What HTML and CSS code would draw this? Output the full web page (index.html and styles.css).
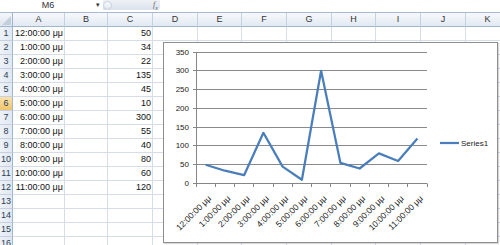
FILE: index.html
```html
<!DOCTYPE html>
<html>
<head>
    <title>Book1 - Chart</title>
    <link rel="stylesheet" href="styles.css">
</head>
<body>
    <div class="formula-bar">
        <div class="name-box">M6</div>
        <div class="name-arrow">&#9662;</div>
        <div class="fx-pill">
            <span class="fx-knob"></span>
            <span class="fx">f<sub>x</sub></span>
        </div>
        <div class="formula-input"></div>
    </div>

    <div class="sheet">
        <div class="grid" id="grid"></div>
        <div class="chart">
            <svg id="chart" width="335" height="201"></svg>
        </div>
    </div>

    <script>
        const COLS = ['A', 'B', 'C', 'D', 'E', 'F', 'G', 'H', 'I', 'J', 'K'];
        const values = [50, 34, 22, 135, 45, 10, 300, 55, 40, 80, 60, 120];
        const times = values.map((v, i) => (i === 0 ? 12 : i) + ':00:00 μμ');

        // Build the sheet grid
        const grid = document.getElementById('grid');
        let html = '<div class="corner"><span class="corner-tri"></span></div>';
        COLS.forEach(c => html += `<div class="col-head">${c}</div>`);
        for (let r = 1; r <= 16; r++) {
            html += `<div class="row-head${r === 6 ? ' selected' : ''}">${r}</div>`;
            COLS.forEach(c => {
                let text = '';
                if (r <= 12 && c === 'A') text = times[r - 1];
                if (r <= 12 && c === 'C') text = values[r - 1];
                html += `<div class="cell${text !== '' ? ' num' : ''}">${text}</div>`;
            });
        }
        grid.innerHTML = html;

        // Line chart
        const L = 33, R = 264, Y0 = 141.5;
        const step = (R - L) / 12;
        const scale = 131.5 / 350;
        const crisp = y => Math.round(y - 0.5) + 0.5;
        let s = '';

        for (let v = 0; v <= 350; v += 50) {
            const y = crisp(Y0 - v * scale);
            if (v > 0) s += `<line class="grid-line" x1="${L}" x2="${R}" y1="${y}" y2="${y}"/>`;
            s += `<line class="axis" x1="${L - 3}" x2="${L}" y1="${y}" y2="${y}"/>`;
            s += `<text class="y-label" x="26" y="${y + 2.8}">${v}</text>`;
        }
        s += `<line class="axis" x1="${L + 0.5}" x2="${L + 0.5}" y1="10" y2="${Y0}"/>`;
        s += `<line class="axis" x1="${L}" x2="${R}" y1="${Y0}" y2="${Y0}"/>`;

        for (let k = 0; k <= 12; k++) {
            const x = crisp(L + k * step);
            s += `<line class="axis" x1="${x}" x2="${x}" y1="${Y0}" y2="${Y0 + 3.5}"/>`;
        }

        times.forEach((t, i) => {
            const x = L + step * (i + 0.5) + 6;
            const y = 157;
            s += `<text class="x-label" x="${x}" y="${y}" transform="rotate(-45 ${x} ${y})">${t}</text>`;
        });

        const pts = values.map((v, i) => `${(L + step * (i + 0.5)).toFixed(1)},${(Y0 - v * scale).toFixed(1)}`);
        s += `<polyline class="series" points="${pts.join(' ')}"/>`;

        // Legend
        s += '<line class="series" x1="277" x2="296" y1="101" y2="101"/>';
        s += '<text class="legend" x="298" y="104">Series1</text>';

        document.getElementById('chart').innerHTML = s;
    </script>
</body>
</html>
```

FILE: styles.css
```css
body {
    margin: 0;
    width: 500px;
    height: 245px;
    overflow: hidden;
    background-color: white;
    font-family: "Liberation Sans", Arial, sans-serif;
    font-size: 9px;
    color: #111;
}
.formula-bar {
    display: flex;
    align-items: flex-start;
    height: 12px;
    border-bottom: 1px solid #a7bad1;
    background-color: white;
}
.name-box {
    width: 96px;
    text-align: center;
    line-height: 10px;
    color: #333;
}
.name-arrow {
    width: 7px;
    font-size: 7px;
    line-height: 10px;
    color: #333;
}
.fx-pill {
    display: flex;
    align-items: center;
    justify-content: space-between;
    width: 57px;
    height: 10px;
    border-radius: 0 0 4px 0;
    background: linear-gradient(#eef2f7, #d9e1eb);
}
.fx-knob {
    width: 9px;
    height: 9px;
    border-radius: 50%;
    border: 1px solid #c8d2de;
    background: linear-gradient(#fdfdfe, #dfe6ef);
    box-sizing: border-box;
}
.fx {
    font-family: "Liberation Serif", serif;
    font-style: italic;
    font-size: 8px;
    color: #666;
    padding-right: 2px;
}
.fx sub {
    font-size: 6px;
}
.formula-input {
    flex: 1;
}
.sheet {
    position: relative;
}
.grid {
    display: grid;
    grid-template-columns: 13px 52px 43px 45px 45px 44px 45px 45px 44px 45px 45px 44px;
    grid-auto-rows: 14px;
    width: 510px;
}
.grid > div {
    box-sizing: border-box;
    line-height: 13px;
    white-space: nowrap;
    overflow: hidden;
}
.corner {
    position: relative;
    background: linear-gradient(#f4f6fa, #dfe5ee);
    border-right: 1px solid #9eb6ce;
    border-bottom: 1px solid #9eb6ce;
}
.corner-tri {
    position: absolute;
    right: 1px;
    bottom: 1px;
    border-left: 9px solid transparent;
    border-bottom: 9px solid #c3cfdd;
}
.col-head {
    text-align: center;
    color: #333;
    background: linear-gradient(#f7f9fc, #e2e9f2);
    border-right: 1px solid #c6d1df;
    border-bottom: 1px solid #9eb6ce;
}
.row-head {
    text-align: center;
    color: #2d3f55;
    background: linear-gradient(90deg, #eef2f8, #e1e8f1);
    border-right: 1px solid #9eb6ce;
    border-bottom: 1px solid #c6d1df;
}
.row-head.selected {
    background: linear-gradient(#f9e1ad, #f2c46b);
}
.cell {
    border-right: 1px solid #d7dde8;
    border-bottom: 1px solid #d7dde8;
    padding: 0 1px;
}
.cell.num {
    text-align: right;
}
.chart {
    position: absolute;
    left: 163px;
    top: 29px;
    width: 335px;
    height: 201px;
    box-sizing: border-box;
    border: 1px solid #8e8e8e;
    background-color: white;
    box-shadow: 1px 1px 1px rgba(0,0,0,0.15);
}
.chart svg {
    display: block;
    position: absolute;
    left: -1px;
    top: -1px;
}
.grid-line {
    stroke: #8a8a8a;
    stroke-width: 1;
}
.axis {
    stroke: #868686;
    stroke-width: 1;
}
.y-label {
    font-family: "Liberation Sans", Arial, sans-serif;
    font-size: 8px;
    fill: #222;
    text-anchor: end;
}
.x-label {
    font-family: "Liberation Sans", Arial, sans-serif;
    font-size: 8.5px;
    fill: #222;
    text-anchor: end;
}
.legend {
    font-family: "Liberation Sans", Arial, sans-serif;
    font-size: 8px;
    fill: #222;
}
.series {
    fill: none;
    stroke: #4a7ebb;
    stroke-width: 2.25;
    stroke-linejoin: round;
}
```
